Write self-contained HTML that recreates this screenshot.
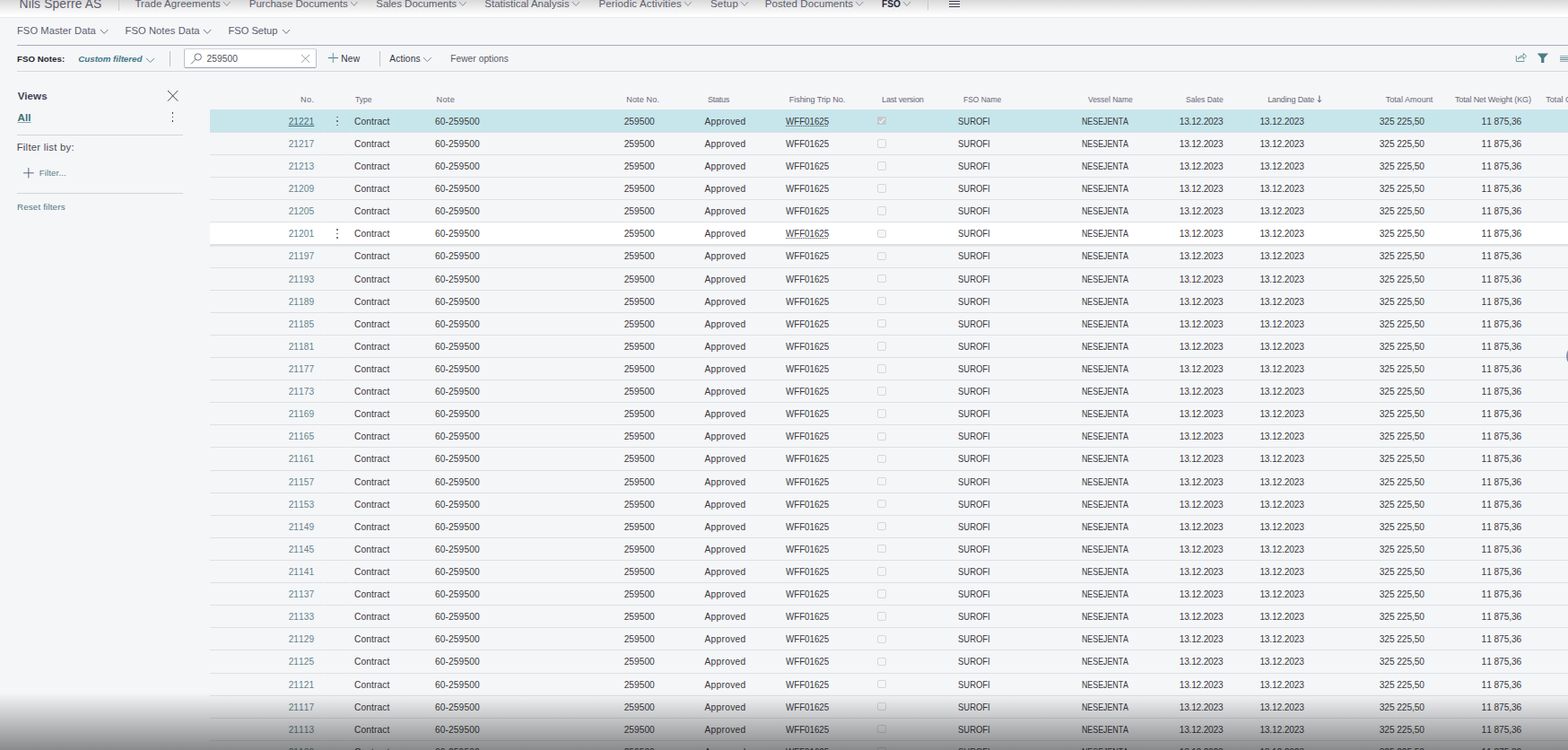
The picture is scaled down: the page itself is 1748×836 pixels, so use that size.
<!DOCTYPE html>
<html lang="en"><head><meta charset="utf-8"><title>FSO Notes</title><style>
html,body{margin:0;padding:0}
body{width:1748px;height:836px;overflow:hidden;position:relative;background:#f5f6f8;font-family:"Liberation Sans", sans-serif}
nav,header,aside,main,.r{display:block;margin:0;padding:0}
.a{position:absolute;display:block}
.t{position:absolute;white-space:nowrap;line-height:14px;display:block}
.d{font-size:10.2px;font-kerning:none}
#nav1{position:absolute;left:0;top:0;width:1748px;height:19px;background:linear-gradient(to bottom,#d9d9d9 0,#e7e7e7 6px,#f5f5f5 12px,#ffffff 18px);border-bottom:1px solid #e9eaec}
#search{background:#fff;border:1px solid #bdbfc8;border-top-color:#d3d5da;border-bottom-color:#9c9eae;border-radius:2px;box-sizing:border-box}
.ln{position:absolute;left:234px;width:1520px;height:1px;background:linear-gradient(to right,#dee0e4 0,#dee0e4 127px,#eceef1 127px,#eceef1 128px,#dee0e4 128px,#dee0e4 156px,#eceef1 156px,#eceef1 157px,#dee0e4 157px)}
.cb{position:absolute;left:978.2px;width:9.8px;height:9.4px;box-sizing:border-box;border:1px solid #d5d7da;border-radius:2px;background:#f5f6f7}
</style></head>
<body>
<nav>
<div id="nav1"></div>
<span id="co" class="t" style="left:21.57px;top:-2.00px;font-size:13.8px;letter-spacing:0.151px;color:#5c5c6e">Nils Sperre AS</span>
<span id="n1_0" class="t" style="left:150.41px;top:-3.00px;font-size:11.5px;letter-spacing:0.073px;color:#5c5c6e">Trade Agreements</span>
<span id="n1_1" class="t" style="left:277.81px;top:-3.00px;font-size:11.5px;letter-spacing:-0.004px;color:#5c5c6e">Purchase Documents</span>
<span id="n1_2" class="t" style="left:419.31px;top:-3.00px;font-size:11.5px;letter-spacing:-0.025px;color:#5c5c6e">Sales Documents</span>
<span id="n1_3" class="t" style="left:540.31px;top:-3.00px;font-size:11.5px;letter-spacing:-0.012px;color:#5c5c6e">Statistical Analysis</span>
<span id="n1_4" class="t" style="left:667.51px;top:-3.00px;font-size:11.5px;letter-spacing:0.150px;color:#5c5c6e">Periodic Activities</span>
<span id="n1_5" class="t" style="left:792.01px;top:-3.00px;font-size:11.5px;letter-spacing:0.204px;color:#5c5c6e">Setup</span>
<span id="n1_6" class="t" style="left:852.71px;top:-3.00px;font-size:11.5px;letter-spacing:0.081px;color:#5c5c6e">Posted Documents</span>
<span id="n1_fso" class="t" style="left:983.11px;top:-3.00px;font-size:11.5px;transform:scaleX(0.8790);transform-origin:0 0;color:#26263a;font-weight:bold">FSO</span>
<span id="n2_0" class="t" style="left:18.97px;top:27.00px;font-size:11.2px;letter-spacing:0.058px;color:#5c5c6e">FSO Master Data</span>
<span id="n2_1" class="t" style="left:139.47px;top:27.00px;font-size:11.2px;letter-spacing:0.078px;color:#5c5c6e">FSO Notes Data</span>
<span id="n2_2" class="t" style="left:254.47px;top:27.00px;font-size:11.2px;letter-spacing:-0.035px;color:#5c5c6e">FSO Setup</span>
<svg class="a" style="left:248.00px;top:1.40px" width="9.50" height="6.40" viewBox="-1 -1 9.50 6.40"><path d="M0 0 L3.75 4.40 L7.50 0" fill="none" stroke="#8d8d9c" stroke-width="1.0"/></svg>
<svg class="a" style="left:389.50px;top:1.40px" width="9.50" height="6.40" viewBox="-1 -1 9.50 6.40"><path d="M0 0 L3.75 4.40 L7.50 0" fill="none" stroke="#8d8d9c" stroke-width="1.0"/></svg>
<svg class="a" style="left:510.80px;top:1.40px" width="9.80" height="6.40" viewBox="-1 -1 9.80 6.40"><path d="M0 0 L3.90 4.40 L7.80 0" fill="none" stroke="#8d8d9c" stroke-width="1.0"/></svg>
<svg class="a" style="left:636.60px;top:1.40px" width="10.10" height="6.40" viewBox="-1 -1 10.10 6.40"><path d="M0 0 L4.05 4.40 L8.10 0" fill="none" stroke="#8d8d9c" stroke-width="1.0"/></svg>
<svg class="a" style="left:761.50px;top:1.40px" width="9.80" height="6.40" viewBox="-1 -1 9.80 6.40"><path d="M0 0 L3.90 4.40 L7.80 0" fill="none" stroke="#8d8d9c" stroke-width="1.0"/></svg>
<svg class="a" style="left:824.60px;top:1.40px" width="10.10" height="6.40" viewBox="-1 -1 10.10 6.40"><path d="M0 0 L4.05 4.40 L8.10 0" fill="none" stroke="#8d8d9c" stroke-width="1.0"/></svg>
<svg class="a" style="left:952.50px;top:1.40px" width="10.30" height="6.40" viewBox="-1 -1 10.30 6.40"><path d="M0 0 L4.15 4.40 L8.30 0" fill="none" stroke="#8d8d9c" stroke-width="1.0"/></svg>
<svg class="a" style="left:1005.90px;top:1.40px" width="10.00" height="6.40" viewBox="-1 -1 10.00 6.40"><path d="M0 0 L4.00 4.40 L8.00 0" fill="none" stroke="#8d8d9c" stroke-width="1.0"/></svg>
<div class="a" style="left:132px;top:0;width:1px;height:11.6px;background:#c9c9cf"></div>
<div class="a" style="left:1033.5px;top:0;width:1px;height:11.4px;background:#c9c9cf"></div>
<div class="a" style="left:1058px;top:0.7px;width:12px;height:1px;background:#3c3c55"></div>
<div class="a" style="left:1058px;top:4.0px;width:12px;height:1px;background:#3c3c55"></div>
<div class="a" style="left:1058px;top:7.4px;width:12px;height:1px;background:#3c3c55"></div>
<svg class="a" style="left:111.40px;top:31.80px" width="10.40" height="6.40" viewBox="-1 -1 10.40 6.40"><path d="M0 0 L4.20 4.40 L8.40 0" fill="none" stroke="#6e6e80" stroke-width="1.0"/></svg>
<svg class="a" style="left:226.30px;top:31.80px" width="10.30" height="6.40" viewBox="-1 -1 10.30 6.40"><path d="M0 0 L4.15 4.40 L8.30 0" fill="none" stroke="#6e6e80" stroke-width="1.0"/></svg>
<svg class="a" style="left:313.50px;top:31.80px" width="10.10" height="6.40" viewBox="-1 -1 10.10 6.40"><path d="M0 0 L4.05 4.40 L8.10 0" fill="none" stroke="#6e6e80" stroke-width="1.0"/></svg>
</nav>
<header>
<div class="a" id="search" style="left:205.2px;top:54px;width:147.5px;height:21.8px"></div>
<span id="tb_title" class="t" style="left:19.05px;top:59.00px;font-size:9.7px;letter-spacing:0.041px;color:#24242e;font-weight:bold">FSO Notes:</span>
<span id="tb_cf" class="t" style="left:87.29px;top:59.00px;font-size:9.8px;letter-spacing:-0.054px;color:#437888;font-style:italic;font-weight:bold">Custom filtered</span>
<span id="tb_search" class="t" style="left:230.39px;top:59.00px;font-size:10.2px;letter-spacing:0.112px;color:#50505c">259500</span>
<span id="tb_new" class="t" style="left:380.19px;top:59.00px;font-size:10.2px;letter-spacing:0.317px;color:#34343e">New</span>
<span id="tb_act" class="t" style="left:434.33px;top:59.00px;font-size:10.2px;letter-spacing:0.140px;color:#34343e">Actions</span>
<span id="tb_fewer" class="t" style="left:502.21px;top:59.00px;font-size:10.2px;letter-spacing:0.054px;color:#5a5a66">Fewer options</span>
<div class="a" style="left:19.3px;top:50px;width:1730px;height:1px;background:#a7aabb"></div>
<div class="a" style="left:19.3px;top:79px;width:1730px;height:1.4px;background:#d5d7dc"></div>
<svg class="a" style="left:161.90px;top:63.60px" width="11.10" height="6.40" viewBox="-1 -1 11.10 6.40"><path d="M0 0 L4.55 4.40 L9.10 0" fill="none" stroke="#6a939c" stroke-width="1.0"/></svg>
<div class="a" style="left:189px;top:57px;width:1px;height:16.7px;background:#bdbdc4"></div>
<svg class="a" style="left:212.4px;top:59px" width="15" height="14" viewBox="0 0 15 14"><circle cx="8.7" cy="4.5" r="3.7" fill="none" stroke="#616d76" stroke-width="0.95"/><path d="M6.0 7.3 L1.0 12.4" stroke="#616d76" stroke-width="0.95" fill="none"/></svg>
<svg class="a" style="left:334.8px;top:60.1px" width="12" height="12" viewBox="0 0 12 12"><path d="M1.1 0.9 L10.1 9.7 M10.1 0.9 L1.1 9.7" stroke="#858a94" stroke-width="0.85" fill="none"/></svg>
<svg class="a" style="left:364.7px;top:58px" width="13" height="13" viewBox="0 0 13 13"><path d="M0.8 6.5 H12" stroke="#4a7f8b" stroke-width="1.1" fill="none"/><path d="M6.35 1 V11.9" stroke="#7fa6ae" stroke-width="1.2" fill="none"/></svg>
<div class="a" style="left:423.3px;top:57px;width:1px;height:16.5px;background:#c4c4cb"></div>
<svg class="a" style="left:471.20px;top:63.00px" width="10.80" height="6.70" viewBox="-1 -1 10.80 6.70"><path d="M0 0 L4.40 4.70 L8.80 0" fill="none" stroke="#8c8c98" stroke-width="1.0"/></svg>
<svg class="a" style="left:1689px;top:58px" width="14" height="12" viewBox="0 0 14 12"><path d="M1.4 4.1 V10.5 H9.9 V9.2" fill="none" stroke="#4a7c86" stroke-width="0.8"/><path d="M3.3 8 C3.9 5.2 6.2 3.9 9.4 3.9 V1.5 L12.8 4.7 L9.4 7.9 V5.6 C6.9 5.6 4.9 6.2 3.3 8 Z" fill="none" stroke="#4a7c86" stroke-width="0.75" stroke-linejoin="round"/></svg>
<svg class="a" style="left:1713px;top:59px" width="14" height="12" viewBox="0 0 14 12"><path d="M0.8 0.5 H13.1 L8.35 5.8 V10.9 H5.15 V5.8 Z" fill="#4a7c86"/></svg>
<div class="a" style="left:1738.8px;top:62.0px;width:1px;height:0.8px;background:#8fb0b7"></div>
<div class="a" style="left:1740.4px;top:62.0px;width:8px;height:0.8px;background:#8fb0b7"></div>
<div class="a" style="left:1738.8px;top:64.19999999999999px;width:1px;height:0.8px;background:#5b8791"></div>
<div class="a" style="left:1740.4px;top:64.19999999999999px;width:8px;height:0.8px;background:#5b8791"></div>
<div class="a" style="left:1738.8px;top:66.1px;width:1px;height:0.8px;background:#5b8791"></div>
<div class="a" style="left:1740.4px;top:66.1px;width:8px;height:0.8px;background:#5b8791"></div>
<div class="a" style="left:1738.8px;top:68.1px;width:1px;height:0.8px;background:#8fb0b7"></div>
<div class="a" style="left:1740.4px;top:68.1px;width:8px;height:0.8px;background:#8fb0b7"></div>
</header>
<aside>
<span id="lp_views" class="t" style="left:19.68px;top:100.00px;font-size:11.6px;letter-spacing:0.086px;color:#424254;font-weight:bold">Views</span>
<span id="lp_all" class="t" style="left:19.50px;top:124.00px;font-size:11.6px;letter-spacing:0.082px;color:#3b6f7a;font-weight:bold;text-decoration:underline;text-underline-offset:1px;text-decoration-thickness:1px;text-decoration-color:#7fa9b1">All</span>
<span id="lp_flb" class="t" style="left:18.68px;top:157.00px;font-size:11.3px;letter-spacing:0.267px;color:#4a4a55">Filter list by:</span>
<span id="lp_filter" class="t" style="left:43.73px;top:186.00px;font-size:9.6px;letter-spacing:0.149px;color:#5d7d88">Filter...</span>
<span id="lp_reset" class="t" style="left:19.00px;top:224.00px;font-size:9.8px;letter-spacing:0.151px;color:#4f7782">Reset filters</span>
<svg class="a" style="left:185.8px;top:100px" width="14" height="14" viewBox="0 0 14 14"><path d="M1 1 L12.3 12.7 M12.3 1 L1 12.7" stroke="#3e3e4e" stroke-width="1" fill="none"/></svg>
<div class="a" style="left:191.6px;top:125.25px;width:1.4px;height:1.7px;background:#3c3c52"></div>
<div class="a" style="left:191.6px;top:129.90px;width:1.4px;height:1.4px;background:#3c3c52"></div>
<div class="a" style="left:191.6px;top:134.05px;width:1.4px;height:1.7px;background:#3c3c52"></div>
<div class="a" style="left:19.3px;top:149.8px;width:184.6px;height:1px;background:#d3d5d9"></div>
<div class="a" style="left:19.3px;top:214.8px;width:184.6px;height:1px;background:#d3d5d9"></div>
<svg class="a" style="left:25.2px;top:186px" width="14" height="14" viewBox="0 0 14 14"><path d="M1 6.8 H12.7 M6.85 1 V12.5" stroke="#5a6a78" stroke-width="1" fill="none"/></svg>
</aside>
<main>
<span id="h_0" class="t" style="left:334.97px;top:104.00px;font-size:9.1px;letter-spacing:0.429px;color:#686873">No.</span>
<span id="h_1" class="t" style="left:396.36px;top:104.00px;font-size:9.1px;transform:scaleX(0.9346);transform-origin:0 0;color:#686873">Type</span>
<span id="h_2" class="t" style="left:486.55px;top:104.00px;font-size:9.1px;letter-spacing:0.334px;color:#686873">Note</span>
<span id="h_3" class="t" style="left:698.24px;top:104.00px;font-size:9.1px;letter-spacing:0.121px;color:#686873">Note No.</span>
<span id="h_4" class="t" style="left:789.06px;top:104.00px;font-size:9.1px;letter-spacing:-0.298px;color:#686873">Status</span>
<span id="h_5" class="t" style="left:879.78px;top:104.00px;font-size:9.1px;letter-spacing:-0.083px;color:#686873">Fishing Trip No.</span>
<span id="h_6" class="t" style="left:983.06px;top:104.00px;font-size:9.1px;letter-spacing:-0.203px;color:#686873">Last version</span>
<span id="h_7" class="t" style="left:1074.34px;top:104.00px;font-size:9.1px;transform:scaleX(0.9307);transform-origin:0 0;color:#686873">FSO Name</span>
<span id="h_8" class="t" style="left:1213.44px;top:104.00px;font-size:9.1px;transform:scaleX(0.9292);transform-origin:0 0;color:#686873">Vessel Name</span>
<span id="h_9" class="t" style="left:1322.42px;top:104.00px;font-size:9.1px;transform:scaleX(0.9372);transform-origin:0 0;color:#686873">Sales Date</span>
<span id="h_10" class="t" style="left:1413.15px;top:104.00px;font-size:9.1px;letter-spacing:-0.165px;color:#686873">Landing Date</span>
<span id="h_11" class="t" style="left:1544.72px;top:104.00px;font-size:9.1px;color:#686873">Total Amount</span>
<span id="h_12" class="t" style="left:1621.92px;top:104.00px;font-size:9.1px;letter-spacing:-0.158px;color:#686873">Total Net Weight (KG)</span>
<span id="h_last" class="t" style="left:1723.25px;top:104.00px;font-size:9.1px;color:#686873">Total Gross Weight (KG)</span>
<svg class="a" style="left:1467.6px;top:105.6px" width="6" height="9" viewBox="0 0 6 9"><path d="M2.9 0.5 V7.6 M0.8 5.5 L2.9 7.9 L5 5.5" stroke="#5a5a64" stroke-width="1" fill="none"/></svg>
<div class="a" style="left:234px;top:122.1px;width:1520px;height:25.1px;background:#c7e6eb"></div>
<div class="a" style="left:234px;top:248.25px;width:1520px;height:23.81px;background:#ffffff"></div>
<div class="a" style="left:234px;top:272.06px;width:1520px;height:2.2px;background:#dddfe3;box-shadow:0 1px 1.5px rgba(0,0,0,0.06)"></div>
<div class="r">
<div class="ln" style="top:146.91px"></div>
<span class="t d" style="left:321.64px;top:129.00px;letter-spacing:0.081px;color:#64848e;color:#3f6b77;text-decoration:underline;text-underline-offset:1px;">21221</span>
<span class="t d" style="left:394.98px;top:129.00px;letter-spacing:0.126px;color:#38383e;">Contract</span>
<span class="t d" style="left:485.10px;top:129.00px;letter-spacing:0.094px;color:#38383e;">60-259500</span>
<span class="t d" style="left:695.67px;top:129.00px;letter-spacing:0.015px;color:#38383e;">259500</span>
<span class="t d" style="left:785.50px;top:129.00px;letter-spacing:0.289px;color:#38383e;">Approved</span>
<span class="t d" style="left:875.83px;top:129.00px;transform:scaleX(0.9552);transform-origin:0 0;color:#38383e;text-decoration:underline dotted;text-underline-offset:0.5px;text-decoration-thickness:1px;">WFF01625</span>
<span class="t d" style="left:1067.85px;top:129.00px;transform:scaleX(0.9282);transform-origin:0 0;color:#38383e;">SUROFI</span>
<span class="t d" style="left:1206.48px;top:129.00px;transform:scaleX(0.8660);transform-origin:0 0;color:#38383e;">NESEJENTA</span>
<span class="t d" style="left:1314.69px;top:129.00px;letter-spacing:-0.223px;color:#38383e;">13.12.2023</span>
<span class="t d" style="left:1404.38px;top:129.00px;letter-spacing:-0.166px;color:#38383e;">13.12.2023</span>
<span class="t d" style="left:1537.75px;top:129.00px;letter-spacing:-0.087px;color:#38383e;">325 225,50</span>
<span class="t d" style="left:1651.57px;top:129.00px;letter-spacing:-0.083px;color:#38383e;">11 875,36</span>
<svg class="a" style="left:978.2px;top:130.00px" width="9.8" height="9.4" viewBox="0 0 9.8 9.4"><rect x="0" y="0" width="9.7" height="9.2" rx="1.6" fill="#c3c9cc"/><path d="M2.1 4.9 L4.0 7.0 L8.0 1.9" stroke="#f4f8f9" stroke-width="1.3" fill="none"/></svg>
<div class="a" style="left:374.95px;top:129.90px;width:2px;height:1.3px;border-radius:0.5px;background:#6c6c7a"></div>
<div class="a" style="left:374.95px;top:134.10px;width:2px;height:1.7px;border-radius:0.5px;background:#6c6c7a"></div>
<div class="a" style="left:374.95px;top:138.75px;width:2px;height:1.3px;border-radius:0.5px;background:#6c6c7a"></div>
</div>
<div class="r">
<div class="ln" style="top:172.02px"></div>
<span id="c_no" class="t d" style="left:321.64px;top:154.00px;letter-spacing:0.081px;color:#64848e;">21217</span>
<span id="c_type" class="t d" style="left:394.98px;top:154.00px;letter-spacing:0.126px;color:#38383e;">Contract</span>
<span id="c_note" class="t d" style="left:485.10px;top:154.00px;letter-spacing:0.094px;color:#38383e;">60-259500</span>
<span id="c_nn" class="t d" style="left:695.67px;top:154.00px;letter-spacing:0.015px;color:#38383e;">259500</span>
<span id="c_st" class="t d" style="left:785.50px;top:154.00px;letter-spacing:0.289px;color:#38383e;">Approved</span>
<span id="c_ft" class="t d" style="left:875.83px;top:154.00px;transform:scaleX(0.9552);transform-origin:0 0;color:#38383e;">WFF01625</span>
<span id="c_fso" class="t d" style="left:1067.85px;top:154.00px;transform:scaleX(0.9282);transform-origin:0 0;color:#38383e;">SUROFI</span>
<span id="c_ves" class="t d" style="left:1206.48px;top:154.00px;transform:scaleX(0.8660);transform-origin:0 0;color:#38383e;">NESEJENTA</span>
<span id="c_sd" class="t d" style="left:1314.69px;top:154.00px;letter-spacing:-0.223px;color:#38383e;">13.12.2023</span>
<span id="c_ld" class="t d" style="left:1404.38px;top:154.00px;letter-spacing:-0.166px;color:#38383e;">13.12.2023</span>
<span id="c_ta" class="t d" style="left:1537.75px;top:154.00px;letter-spacing:-0.087px;color:#38383e;">325 225,50</span>
<span id="c_nw" class="t d" style="left:1651.57px;top:154.00px;letter-spacing:-0.083px;color:#38383e;">11 875,36</span>
<div class="cb" style="top:155.12px"></div>
</div>
<div class="r">
<div class="ln" style="top:197.13px"></div>
<span class="t d" style="left:321.64px;top:179.00px;letter-spacing:0.081px;color:#64848e;">21213</span>
<span class="t d" style="left:394.98px;top:179.00px;letter-spacing:0.126px;color:#38383e;">Contract</span>
<span class="t d" style="left:485.10px;top:179.00px;letter-spacing:0.094px;color:#38383e;">60-259500</span>
<span class="t d" style="left:695.67px;top:179.00px;letter-spacing:0.015px;color:#38383e;">259500</span>
<span class="t d" style="left:785.50px;top:179.00px;letter-spacing:0.289px;color:#38383e;">Approved</span>
<span class="t d" style="left:875.83px;top:179.00px;transform:scaleX(0.9552);transform-origin:0 0;color:#38383e;">WFF01625</span>
<span class="t d" style="left:1067.85px;top:179.00px;transform:scaleX(0.9282);transform-origin:0 0;color:#38383e;">SUROFI</span>
<span class="t d" style="left:1206.48px;top:179.00px;transform:scaleX(0.8660);transform-origin:0 0;color:#38383e;">NESEJENTA</span>
<span class="t d" style="left:1314.69px;top:179.00px;letter-spacing:-0.223px;color:#38383e;">13.12.2023</span>
<span class="t d" style="left:1404.38px;top:179.00px;letter-spacing:-0.166px;color:#38383e;">13.12.2023</span>
<span class="t d" style="left:1537.75px;top:179.00px;letter-spacing:-0.087px;color:#38383e;">325 225,50</span>
<span class="t d" style="left:1651.57px;top:179.00px;letter-spacing:-0.083px;color:#38383e;">11 875,36</span>
<div class="cb" style="top:180.22px"></div>
</div>
<div class="r">
<div class="ln" style="top:222.24px"></div>
<span class="t d" style="left:321.64px;top:204.00px;letter-spacing:0.081px;color:#64848e;">21209</span>
<span class="t d" style="left:394.98px;top:204.00px;letter-spacing:0.126px;color:#38383e;">Contract</span>
<span class="t d" style="left:485.10px;top:204.00px;letter-spacing:0.094px;color:#38383e;">60-259500</span>
<span class="t d" style="left:695.67px;top:204.00px;letter-spacing:0.015px;color:#38383e;">259500</span>
<span class="t d" style="left:785.50px;top:204.00px;letter-spacing:0.289px;color:#38383e;">Approved</span>
<span class="t d" style="left:875.83px;top:204.00px;transform:scaleX(0.9552);transform-origin:0 0;color:#38383e;">WFF01625</span>
<span class="t d" style="left:1067.85px;top:204.00px;transform:scaleX(0.9282);transform-origin:0 0;color:#38383e;">SUROFI</span>
<span class="t d" style="left:1206.48px;top:204.00px;transform:scaleX(0.8660);transform-origin:0 0;color:#38383e;">NESEJENTA</span>
<span class="t d" style="left:1314.69px;top:204.00px;letter-spacing:-0.223px;color:#38383e;">13.12.2023</span>
<span class="t d" style="left:1404.38px;top:204.00px;letter-spacing:-0.166px;color:#38383e;">13.12.2023</span>
<span class="t d" style="left:1537.75px;top:204.00px;letter-spacing:-0.087px;color:#38383e;">325 225,50</span>
<span class="t d" style="left:1651.57px;top:204.00px;letter-spacing:-0.083px;color:#38383e;">11 875,36</span>
<div class="cb" style="top:205.34px"></div>
</div>
<div class="r">
<div class="ln" style="top:247.35px"></div>
<span class="t d" style="left:321.64px;top:229.00px;letter-spacing:0.081px;color:#64848e;">21205</span>
<span class="t d" style="left:394.98px;top:229.00px;letter-spacing:0.126px;color:#38383e;">Contract</span>
<span class="t d" style="left:485.10px;top:229.00px;letter-spacing:0.094px;color:#38383e;">60-259500</span>
<span class="t d" style="left:695.67px;top:229.00px;letter-spacing:0.015px;color:#38383e;">259500</span>
<span class="t d" style="left:785.50px;top:229.00px;letter-spacing:0.289px;color:#38383e;">Approved</span>
<span class="t d" style="left:875.83px;top:229.00px;transform:scaleX(0.9552);transform-origin:0 0;color:#38383e;">WFF01625</span>
<span class="t d" style="left:1067.85px;top:229.00px;transform:scaleX(0.9282);transform-origin:0 0;color:#38383e;">SUROFI</span>
<span class="t d" style="left:1206.48px;top:229.00px;transform:scaleX(0.8660);transform-origin:0 0;color:#38383e;">NESEJENTA</span>
<span class="t d" style="left:1314.69px;top:229.00px;letter-spacing:-0.223px;color:#38383e;">13.12.2023</span>
<span class="t d" style="left:1404.38px;top:229.00px;letter-spacing:-0.166px;color:#38383e;">13.12.2023</span>
<span class="t d" style="left:1537.75px;top:229.00px;letter-spacing:-0.087px;color:#38383e;">325 225,50</span>
<span class="t d" style="left:1651.57px;top:229.00px;letter-spacing:-0.083px;color:#38383e;">11 875,36</span>
<div class="cb" style="top:230.45px"></div>
</div>
<div class="r">
<div class="ln" style="top:272.46px"></div>
<span class="t d" style="left:321.64px;top:254.00px;letter-spacing:0.081px;color:#64848e;">21201</span>
<span class="t d" style="left:394.98px;top:254.00px;letter-spacing:0.126px;color:#38383e;">Contract</span>
<span class="t d" style="left:485.10px;top:254.00px;letter-spacing:0.094px;color:#38383e;">60-259500</span>
<span class="t d" style="left:695.67px;top:254.00px;letter-spacing:0.015px;color:#38383e;">259500</span>
<span class="t d" style="left:785.50px;top:254.00px;letter-spacing:0.289px;color:#38383e;">Approved</span>
<span class="t d" style="left:875.83px;top:254.00px;transform:scaleX(0.9552);transform-origin:0 0;color:#38383e;text-decoration:underline dotted;text-underline-offset:0.5px;text-decoration-thickness:1px;">WFF01625</span>
<span class="t d" style="left:1067.85px;top:254.00px;transform:scaleX(0.9282);transform-origin:0 0;color:#38383e;">SUROFI</span>
<span class="t d" style="left:1206.48px;top:254.00px;transform:scaleX(0.8660);transform-origin:0 0;color:#38383e;">NESEJENTA</span>
<span class="t d" style="left:1314.69px;top:254.00px;letter-spacing:-0.223px;color:#38383e;">13.12.2023</span>
<span class="t d" style="left:1404.38px;top:254.00px;letter-spacing:-0.166px;color:#38383e;">13.12.2023</span>
<span class="t d" style="left:1537.75px;top:254.00px;letter-spacing:-0.087px;color:#38383e;">325 225,50</span>
<span class="t d" style="left:1651.57px;top:254.00px;letter-spacing:-0.083px;color:#38383e;">11 875,36</span>
<div class="cb" style="top:255.56px"></div>
<div class="a" style="left:374.95px;top:255.46px;width:2px;height:1.3px;border-radius:0.5px;background:#6c6c7a"></div>
<div class="a" style="left:374.95px;top:259.65px;width:2px;height:1.7px;border-radius:0.5px;background:#6c6c7a"></div>
<div class="a" style="left:374.95px;top:264.31px;width:2px;height:1.3px;border-radius:0.5px;background:#6c6c7a"></div>
</div>
<div class="r">
<div class="ln" style="top:297.57px"></div>
<span class="t d" style="left:321.64px;top:279.00px;letter-spacing:0.081px;color:#64848e;">21197</span>
<span class="t d" style="left:394.98px;top:279.00px;letter-spacing:0.126px;color:#38383e;">Contract</span>
<span class="t d" style="left:485.10px;top:279.00px;letter-spacing:0.094px;color:#38383e;">60-259500</span>
<span class="t d" style="left:695.67px;top:279.00px;letter-spacing:0.015px;color:#38383e;">259500</span>
<span class="t d" style="left:785.50px;top:279.00px;letter-spacing:0.289px;color:#38383e;">Approved</span>
<span class="t d" style="left:875.83px;top:279.00px;transform:scaleX(0.9552);transform-origin:0 0;color:#38383e;">WFF01625</span>
<span class="t d" style="left:1067.85px;top:279.00px;transform:scaleX(0.9282);transform-origin:0 0;color:#38383e;">SUROFI</span>
<span class="t d" style="left:1206.48px;top:279.00px;transform:scaleX(0.8660);transform-origin:0 0;color:#38383e;">NESEJENTA</span>
<span class="t d" style="left:1314.69px;top:279.00px;letter-spacing:-0.223px;color:#38383e;">13.12.2023</span>
<span class="t d" style="left:1404.38px;top:279.00px;letter-spacing:-0.166px;color:#38383e;">13.12.2023</span>
<span class="t d" style="left:1537.75px;top:279.00px;letter-spacing:-0.087px;color:#38383e;">325 225,50</span>
<span class="t d" style="left:1651.57px;top:279.00px;letter-spacing:-0.083px;color:#38383e;">11 875,36</span>
<div class="cb" style="top:280.67px"></div>
</div>
<div class="r">
<div class="ln" style="top:322.68px"></div>
<span class="t d" style="left:321.64px;top:305.00px;letter-spacing:0.081px;color:#64848e;">21193</span>
<span class="t d" style="left:394.98px;top:305.00px;letter-spacing:0.126px;color:#38383e;">Contract</span>
<span class="t d" style="left:485.10px;top:305.00px;letter-spacing:0.094px;color:#38383e;">60-259500</span>
<span class="t d" style="left:695.67px;top:305.00px;letter-spacing:0.015px;color:#38383e;">259500</span>
<span class="t d" style="left:785.50px;top:305.00px;letter-spacing:0.289px;color:#38383e;">Approved</span>
<span class="t d" style="left:875.83px;top:305.00px;transform:scaleX(0.9552);transform-origin:0 0;color:#38383e;">WFF01625</span>
<span class="t d" style="left:1067.85px;top:305.00px;transform:scaleX(0.9282);transform-origin:0 0;color:#38383e;">SUROFI</span>
<span class="t d" style="left:1206.48px;top:305.00px;transform:scaleX(0.8660);transform-origin:0 0;color:#38383e;">NESEJENTA</span>
<span class="t d" style="left:1314.69px;top:305.00px;letter-spacing:-0.223px;color:#38383e;">13.12.2023</span>
<span class="t d" style="left:1404.38px;top:305.00px;letter-spacing:-0.166px;color:#38383e;">13.12.2023</span>
<span class="t d" style="left:1537.75px;top:305.00px;letter-spacing:-0.087px;color:#38383e;">325 225,50</span>
<span class="t d" style="left:1651.57px;top:305.00px;letter-spacing:-0.083px;color:#38383e;">11 875,36</span>
<div class="cb" style="top:305.78px"></div>
</div>
<div class="r">
<div class="ln" style="top:347.79px"></div>
<span class="t d" style="left:321.64px;top:330.00px;letter-spacing:0.081px;color:#64848e;">21189</span>
<span class="t d" style="left:394.98px;top:330.00px;letter-spacing:0.126px;color:#38383e;">Contract</span>
<span class="t d" style="left:485.10px;top:330.00px;letter-spacing:0.094px;color:#38383e;">60-259500</span>
<span class="t d" style="left:695.67px;top:330.00px;letter-spacing:0.015px;color:#38383e;">259500</span>
<span class="t d" style="left:785.50px;top:330.00px;letter-spacing:0.289px;color:#38383e;">Approved</span>
<span class="t d" style="left:875.83px;top:330.00px;transform:scaleX(0.9552);transform-origin:0 0;color:#38383e;">WFF01625</span>
<span class="t d" style="left:1067.85px;top:330.00px;transform:scaleX(0.9282);transform-origin:0 0;color:#38383e;">SUROFI</span>
<span class="t d" style="left:1206.48px;top:330.00px;transform:scaleX(0.8660);transform-origin:0 0;color:#38383e;">NESEJENTA</span>
<span class="t d" style="left:1314.69px;top:330.00px;letter-spacing:-0.223px;color:#38383e;">13.12.2023</span>
<span class="t d" style="left:1404.38px;top:330.00px;letter-spacing:-0.166px;color:#38383e;">13.12.2023</span>
<span class="t d" style="left:1537.75px;top:330.00px;letter-spacing:-0.087px;color:#38383e;">325 225,50</span>
<span class="t d" style="left:1651.57px;top:330.00px;letter-spacing:-0.083px;color:#38383e;">11 875,36</span>
<div class="cb" style="top:330.89px"></div>
</div>
<div class="r">
<div class="ln" style="top:372.90px"></div>
<span class="t d" style="left:321.64px;top:355.00px;letter-spacing:0.081px;color:#64848e;">21185</span>
<span class="t d" style="left:394.98px;top:355.00px;letter-spacing:0.126px;color:#38383e;">Contract</span>
<span class="t d" style="left:485.10px;top:355.00px;letter-spacing:0.094px;color:#38383e;">60-259500</span>
<span class="t d" style="left:695.67px;top:355.00px;letter-spacing:0.015px;color:#38383e;">259500</span>
<span class="t d" style="left:785.50px;top:355.00px;letter-spacing:0.289px;color:#38383e;">Approved</span>
<span class="t d" style="left:875.83px;top:355.00px;transform:scaleX(0.9552);transform-origin:0 0;color:#38383e;">WFF01625</span>
<span class="t d" style="left:1067.85px;top:355.00px;transform:scaleX(0.9282);transform-origin:0 0;color:#38383e;">SUROFI</span>
<span class="t d" style="left:1206.48px;top:355.00px;transform:scaleX(0.8660);transform-origin:0 0;color:#38383e;">NESEJENTA</span>
<span class="t d" style="left:1314.69px;top:355.00px;letter-spacing:-0.223px;color:#38383e;">13.12.2023</span>
<span class="t d" style="left:1404.38px;top:355.00px;letter-spacing:-0.166px;color:#38383e;">13.12.2023</span>
<span class="t d" style="left:1537.75px;top:355.00px;letter-spacing:-0.087px;color:#38383e;">325 225,50</span>
<span class="t d" style="left:1651.57px;top:355.00px;letter-spacing:-0.083px;color:#38383e;">11 875,36</span>
<div class="cb" style="top:356.00px"></div>
</div>
<div class="r">
<div class="ln" style="top:398.01px"></div>
<span class="t d" style="left:321.64px;top:380.00px;letter-spacing:0.081px;color:#64848e;">21181</span>
<span class="t d" style="left:394.98px;top:380.00px;letter-spacing:0.126px;color:#38383e;">Contract</span>
<span class="t d" style="left:485.10px;top:380.00px;letter-spacing:0.094px;color:#38383e;">60-259500</span>
<span class="t d" style="left:695.67px;top:380.00px;letter-spacing:0.015px;color:#38383e;">259500</span>
<span class="t d" style="left:785.50px;top:380.00px;letter-spacing:0.289px;color:#38383e;">Approved</span>
<span class="t d" style="left:875.83px;top:380.00px;transform:scaleX(0.9552);transform-origin:0 0;color:#38383e;">WFF01625</span>
<span class="t d" style="left:1067.85px;top:380.00px;transform:scaleX(0.9282);transform-origin:0 0;color:#38383e;">SUROFI</span>
<span class="t d" style="left:1206.48px;top:380.00px;transform:scaleX(0.8660);transform-origin:0 0;color:#38383e;">NESEJENTA</span>
<span class="t d" style="left:1314.69px;top:380.00px;letter-spacing:-0.223px;color:#38383e;">13.12.2023</span>
<span class="t d" style="left:1404.38px;top:380.00px;letter-spacing:-0.166px;color:#38383e;">13.12.2023</span>
<span class="t d" style="left:1537.75px;top:380.00px;letter-spacing:-0.087px;color:#38383e;">325 225,50</span>
<span class="t d" style="left:1651.57px;top:380.00px;letter-spacing:-0.083px;color:#38383e;">11 875,36</span>
<div class="cb" style="top:381.11px"></div>
</div>
<div class="r">
<div class="ln" style="top:423.12px"></div>
<span class="t d" style="left:321.64px;top:405.00px;letter-spacing:0.081px;color:#64848e;">21177</span>
<span class="t d" style="left:394.98px;top:405.00px;letter-spacing:0.126px;color:#38383e;">Contract</span>
<span class="t d" style="left:485.10px;top:405.00px;letter-spacing:0.094px;color:#38383e;">60-259500</span>
<span class="t d" style="left:695.67px;top:405.00px;letter-spacing:0.015px;color:#38383e;">259500</span>
<span class="t d" style="left:785.50px;top:405.00px;letter-spacing:0.289px;color:#38383e;">Approved</span>
<span class="t d" style="left:875.83px;top:405.00px;transform:scaleX(0.9552);transform-origin:0 0;color:#38383e;">WFF01625</span>
<span class="t d" style="left:1067.85px;top:405.00px;transform:scaleX(0.9282);transform-origin:0 0;color:#38383e;">SUROFI</span>
<span class="t d" style="left:1206.48px;top:405.00px;transform:scaleX(0.8660);transform-origin:0 0;color:#38383e;">NESEJENTA</span>
<span class="t d" style="left:1314.69px;top:405.00px;letter-spacing:-0.223px;color:#38383e;">13.12.2023</span>
<span class="t d" style="left:1404.38px;top:405.00px;letter-spacing:-0.166px;color:#38383e;">13.12.2023</span>
<span class="t d" style="left:1537.75px;top:405.00px;letter-spacing:-0.087px;color:#38383e;">325 225,50</span>
<span class="t d" style="left:1651.57px;top:405.00px;letter-spacing:-0.083px;color:#38383e;">11 875,36</span>
<div class="cb" style="top:406.22px"></div>
</div>
<div class="r">
<div class="ln" style="top:448.23px"></div>
<span class="t d" style="left:321.64px;top:430.00px;letter-spacing:0.081px;color:#64848e;">21173</span>
<span class="t d" style="left:394.98px;top:430.00px;letter-spacing:0.126px;color:#38383e;">Contract</span>
<span class="t d" style="left:485.10px;top:430.00px;letter-spacing:0.094px;color:#38383e;">60-259500</span>
<span class="t d" style="left:695.67px;top:430.00px;letter-spacing:0.015px;color:#38383e;">259500</span>
<span class="t d" style="left:785.50px;top:430.00px;letter-spacing:0.289px;color:#38383e;">Approved</span>
<span class="t d" style="left:875.83px;top:430.00px;transform:scaleX(0.9552);transform-origin:0 0;color:#38383e;">WFF01625</span>
<span class="t d" style="left:1067.85px;top:430.00px;transform:scaleX(0.9282);transform-origin:0 0;color:#38383e;">SUROFI</span>
<span class="t d" style="left:1206.48px;top:430.00px;transform:scaleX(0.8660);transform-origin:0 0;color:#38383e;">NESEJENTA</span>
<span class="t d" style="left:1314.69px;top:430.00px;letter-spacing:-0.223px;color:#38383e;">13.12.2023</span>
<span class="t d" style="left:1404.38px;top:430.00px;letter-spacing:-0.166px;color:#38383e;">13.12.2023</span>
<span class="t d" style="left:1537.75px;top:430.00px;letter-spacing:-0.087px;color:#38383e;">325 225,50</span>
<span class="t d" style="left:1651.57px;top:430.00px;letter-spacing:-0.083px;color:#38383e;">11 875,36</span>
<div class="cb" style="top:431.33px"></div>
</div>
<div class="r">
<div class="ln" style="top:473.34px"></div>
<span class="t d" style="left:321.64px;top:455.00px;letter-spacing:0.081px;color:#64848e;">21169</span>
<span class="t d" style="left:394.98px;top:455.00px;letter-spacing:0.126px;color:#38383e;">Contract</span>
<span class="t d" style="left:485.10px;top:455.00px;letter-spacing:0.094px;color:#38383e;">60-259500</span>
<span class="t d" style="left:695.67px;top:455.00px;letter-spacing:0.015px;color:#38383e;">259500</span>
<span class="t d" style="left:785.50px;top:455.00px;letter-spacing:0.289px;color:#38383e;">Approved</span>
<span class="t d" style="left:875.83px;top:455.00px;transform:scaleX(0.9552);transform-origin:0 0;color:#38383e;">WFF01625</span>
<span class="t d" style="left:1067.85px;top:455.00px;transform:scaleX(0.9282);transform-origin:0 0;color:#38383e;">SUROFI</span>
<span class="t d" style="left:1206.48px;top:455.00px;transform:scaleX(0.8660);transform-origin:0 0;color:#38383e;">NESEJENTA</span>
<span class="t d" style="left:1314.69px;top:455.00px;letter-spacing:-0.223px;color:#38383e;">13.12.2023</span>
<span class="t d" style="left:1404.38px;top:455.00px;letter-spacing:-0.166px;color:#38383e;">13.12.2023</span>
<span class="t d" style="left:1537.75px;top:455.00px;letter-spacing:-0.087px;color:#38383e;">325 225,50</span>
<span class="t d" style="left:1651.57px;top:455.00px;letter-spacing:-0.083px;color:#38383e;">11 875,36</span>
<div class="cb" style="top:456.44px"></div>
</div>
<div class="r">
<div class="ln" style="top:498.45px"></div>
<span class="t d" style="left:321.64px;top:480.00px;letter-spacing:0.081px;color:#64848e;">21165</span>
<span class="t d" style="left:394.98px;top:480.00px;letter-spacing:0.126px;color:#38383e;">Contract</span>
<span class="t d" style="left:485.10px;top:480.00px;letter-spacing:0.094px;color:#38383e;">60-259500</span>
<span class="t d" style="left:695.67px;top:480.00px;letter-spacing:0.015px;color:#38383e;">259500</span>
<span class="t d" style="left:785.50px;top:480.00px;letter-spacing:0.289px;color:#38383e;">Approved</span>
<span class="t d" style="left:875.83px;top:480.00px;transform:scaleX(0.9552);transform-origin:0 0;color:#38383e;">WFF01625</span>
<span class="t d" style="left:1067.85px;top:480.00px;transform:scaleX(0.9282);transform-origin:0 0;color:#38383e;">SUROFI</span>
<span class="t d" style="left:1206.48px;top:480.00px;transform:scaleX(0.8660);transform-origin:0 0;color:#38383e;">NESEJENTA</span>
<span class="t d" style="left:1314.69px;top:480.00px;letter-spacing:-0.223px;color:#38383e;">13.12.2023</span>
<span class="t d" style="left:1404.38px;top:480.00px;letter-spacing:-0.166px;color:#38383e;">13.12.2023</span>
<span class="t d" style="left:1537.75px;top:480.00px;letter-spacing:-0.087px;color:#38383e;">325 225,50</span>
<span class="t d" style="left:1651.57px;top:480.00px;letter-spacing:-0.083px;color:#38383e;">11 875,36</span>
<div class="cb" style="top:481.55px"></div>
</div>
<div class="r">
<div class="ln" style="top:523.56px"></div>
<span class="t d" style="left:321.64px;top:505.00px;letter-spacing:0.081px;color:#64848e;">21161</span>
<span class="t d" style="left:394.98px;top:505.00px;letter-spacing:0.126px;color:#38383e;">Contract</span>
<span class="t d" style="left:485.10px;top:505.00px;letter-spacing:0.094px;color:#38383e;">60-259500</span>
<span class="t d" style="left:695.67px;top:505.00px;letter-spacing:0.015px;color:#38383e;">259500</span>
<span class="t d" style="left:785.50px;top:505.00px;letter-spacing:0.289px;color:#38383e;">Approved</span>
<span class="t d" style="left:875.83px;top:505.00px;transform:scaleX(0.9552);transform-origin:0 0;color:#38383e;">WFF01625</span>
<span class="t d" style="left:1067.85px;top:505.00px;transform:scaleX(0.9282);transform-origin:0 0;color:#38383e;">SUROFI</span>
<span class="t d" style="left:1206.48px;top:505.00px;transform:scaleX(0.8660);transform-origin:0 0;color:#38383e;">NESEJENTA</span>
<span class="t d" style="left:1314.69px;top:505.00px;letter-spacing:-0.223px;color:#38383e;">13.12.2023</span>
<span class="t d" style="left:1404.38px;top:505.00px;letter-spacing:-0.166px;color:#38383e;">13.12.2023</span>
<span class="t d" style="left:1537.75px;top:505.00px;letter-spacing:-0.087px;color:#38383e;">325 225,50</span>
<span class="t d" style="left:1651.57px;top:505.00px;letter-spacing:-0.083px;color:#38383e;">11 875,36</span>
<div class="cb" style="top:506.66px"></div>
</div>
<div class="r">
<div class="ln" style="top:548.67px"></div>
<span class="t d" style="left:321.64px;top:531.00px;letter-spacing:0.081px;color:#64848e;">21157</span>
<span class="t d" style="left:394.98px;top:531.00px;letter-spacing:0.126px;color:#38383e;">Contract</span>
<span class="t d" style="left:485.10px;top:531.00px;letter-spacing:0.094px;color:#38383e;">60-259500</span>
<span class="t d" style="left:695.67px;top:531.00px;letter-spacing:0.015px;color:#38383e;">259500</span>
<span class="t d" style="left:785.50px;top:531.00px;letter-spacing:0.289px;color:#38383e;">Approved</span>
<span class="t d" style="left:875.83px;top:531.00px;transform:scaleX(0.9552);transform-origin:0 0;color:#38383e;">WFF01625</span>
<span class="t d" style="left:1067.85px;top:531.00px;transform:scaleX(0.9282);transform-origin:0 0;color:#38383e;">SUROFI</span>
<span class="t d" style="left:1206.48px;top:531.00px;transform:scaleX(0.8660);transform-origin:0 0;color:#38383e;">NESEJENTA</span>
<span class="t d" style="left:1314.69px;top:531.00px;letter-spacing:-0.223px;color:#38383e;">13.12.2023</span>
<span class="t d" style="left:1404.38px;top:531.00px;letter-spacing:-0.166px;color:#38383e;">13.12.2023</span>
<span class="t d" style="left:1537.75px;top:531.00px;letter-spacing:-0.087px;color:#38383e;">325 225,50</span>
<span class="t d" style="left:1651.57px;top:531.00px;letter-spacing:-0.083px;color:#38383e;">11 875,36</span>
<div class="cb" style="top:531.76px"></div>
</div>
<div class="r">
<div class="ln" style="top:573.78px"></div>
<span class="t d" style="left:321.64px;top:556.00px;letter-spacing:0.081px;color:#64848e;">21153</span>
<span class="t d" style="left:394.98px;top:556.00px;letter-spacing:0.126px;color:#38383e;">Contract</span>
<span class="t d" style="left:485.10px;top:556.00px;letter-spacing:0.094px;color:#38383e;">60-259500</span>
<span class="t d" style="left:695.67px;top:556.00px;letter-spacing:0.015px;color:#38383e;">259500</span>
<span class="t d" style="left:785.50px;top:556.00px;letter-spacing:0.289px;color:#38383e;">Approved</span>
<span class="t d" style="left:875.83px;top:556.00px;transform:scaleX(0.9552);transform-origin:0 0;color:#38383e;">WFF01625</span>
<span class="t d" style="left:1067.85px;top:556.00px;transform:scaleX(0.9282);transform-origin:0 0;color:#38383e;">SUROFI</span>
<span class="t d" style="left:1206.48px;top:556.00px;transform:scaleX(0.8660);transform-origin:0 0;color:#38383e;">NESEJENTA</span>
<span class="t d" style="left:1314.69px;top:556.00px;letter-spacing:-0.223px;color:#38383e;">13.12.2023</span>
<span class="t d" style="left:1404.38px;top:556.00px;letter-spacing:-0.166px;color:#38383e;">13.12.2023</span>
<span class="t d" style="left:1537.75px;top:556.00px;letter-spacing:-0.087px;color:#38383e;">325 225,50</span>
<span class="t d" style="left:1651.57px;top:556.00px;letter-spacing:-0.083px;color:#38383e;">11 875,36</span>
<div class="cb" style="top:556.87px"></div>
</div>
<div class="r">
<div class="ln" style="top:598.89px"></div>
<span class="t d" style="left:321.64px;top:581.00px;letter-spacing:0.081px;color:#64848e;">21149</span>
<span class="t d" style="left:394.98px;top:581.00px;letter-spacing:0.126px;color:#38383e;">Contract</span>
<span class="t d" style="left:485.10px;top:581.00px;letter-spacing:0.094px;color:#38383e;">60-259500</span>
<span class="t d" style="left:695.67px;top:581.00px;letter-spacing:0.015px;color:#38383e;">259500</span>
<span class="t d" style="left:785.50px;top:581.00px;letter-spacing:0.289px;color:#38383e;">Approved</span>
<span class="t d" style="left:875.83px;top:581.00px;transform:scaleX(0.9552);transform-origin:0 0;color:#38383e;">WFF01625</span>
<span class="t d" style="left:1067.85px;top:581.00px;transform:scaleX(0.9282);transform-origin:0 0;color:#38383e;">SUROFI</span>
<span class="t d" style="left:1206.48px;top:581.00px;transform:scaleX(0.8660);transform-origin:0 0;color:#38383e;">NESEJENTA</span>
<span class="t d" style="left:1314.69px;top:581.00px;letter-spacing:-0.223px;color:#38383e;">13.12.2023</span>
<span class="t d" style="left:1404.38px;top:581.00px;letter-spacing:-0.166px;color:#38383e;">13.12.2023</span>
<span class="t d" style="left:1537.75px;top:581.00px;letter-spacing:-0.087px;color:#38383e;">325 225,50</span>
<span class="t d" style="left:1651.57px;top:581.00px;letter-spacing:-0.083px;color:#38383e;">11 875,36</span>
<div class="cb" style="top:581.98px"></div>
</div>
<div class="r">
<div class="ln" style="top:624.00px"></div>
<span class="t d" style="left:321.64px;top:606.00px;letter-spacing:0.081px;color:#64848e;">21145</span>
<span class="t d" style="left:394.98px;top:606.00px;letter-spacing:0.126px;color:#38383e;">Contract</span>
<span class="t d" style="left:485.10px;top:606.00px;letter-spacing:0.094px;color:#38383e;">60-259500</span>
<span class="t d" style="left:695.67px;top:606.00px;letter-spacing:0.015px;color:#38383e;">259500</span>
<span class="t d" style="left:785.50px;top:606.00px;letter-spacing:0.289px;color:#38383e;">Approved</span>
<span class="t d" style="left:875.83px;top:606.00px;transform:scaleX(0.9552);transform-origin:0 0;color:#38383e;">WFF01625</span>
<span class="t d" style="left:1067.85px;top:606.00px;transform:scaleX(0.9282);transform-origin:0 0;color:#38383e;">SUROFI</span>
<span class="t d" style="left:1206.48px;top:606.00px;transform:scaleX(0.8660);transform-origin:0 0;color:#38383e;">NESEJENTA</span>
<span class="t d" style="left:1314.69px;top:606.00px;letter-spacing:-0.223px;color:#38383e;">13.12.2023</span>
<span class="t d" style="left:1404.38px;top:606.00px;letter-spacing:-0.166px;color:#38383e;">13.12.2023</span>
<span class="t d" style="left:1537.75px;top:606.00px;letter-spacing:-0.087px;color:#38383e;">325 225,50</span>
<span class="t d" style="left:1651.57px;top:606.00px;letter-spacing:-0.083px;color:#38383e;">11 875,36</span>
<div class="cb" style="top:607.09px"></div>
</div>
<div class="r">
<div class="ln" style="top:649.11px"></div>
<span class="t d" style="left:321.64px;top:631.00px;letter-spacing:0.081px;color:#64848e;">21141</span>
<span class="t d" style="left:394.98px;top:631.00px;letter-spacing:0.126px;color:#38383e;">Contract</span>
<span class="t d" style="left:485.10px;top:631.00px;letter-spacing:0.094px;color:#38383e;">60-259500</span>
<span class="t d" style="left:695.67px;top:631.00px;letter-spacing:0.015px;color:#38383e;">259500</span>
<span class="t d" style="left:785.50px;top:631.00px;letter-spacing:0.289px;color:#38383e;">Approved</span>
<span class="t d" style="left:875.83px;top:631.00px;transform:scaleX(0.9552);transform-origin:0 0;color:#38383e;">WFF01625</span>
<span class="t d" style="left:1067.85px;top:631.00px;transform:scaleX(0.9282);transform-origin:0 0;color:#38383e;">SUROFI</span>
<span class="t d" style="left:1206.48px;top:631.00px;transform:scaleX(0.8660);transform-origin:0 0;color:#38383e;">NESEJENTA</span>
<span class="t d" style="left:1314.69px;top:631.00px;letter-spacing:-0.223px;color:#38383e;">13.12.2023</span>
<span class="t d" style="left:1404.38px;top:631.00px;letter-spacing:-0.166px;color:#38383e;">13.12.2023</span>
<span class="t d" style="left:1537.75px;top:631.00px;letter-spacing:-0.087px;color:#38383e;">325 225,50</span>
<span class="t d" style="left:1651.57px;top:631.00px;letter-spacing:-0.083px;color:#38383e;">11 875,36</span>
<div class="cb" style="top:632.20px"></div>
</div>
<div class="r">
<div class="ln" style="top:674.22px"></div>
<span class="t d" style="left:321.64px;top:656.00px;letter-spacing:0.081px;color:#64848e;">21137</span>
<span class="t d" style="left:394.98px;top:656.00px;letter-spacing:0.126px;color:#38383e;">Contract</span>
<span class="t d" style="left:485.10px;top:656.00px;letter-spacing:0.094px;color:#38383e;">60-259500</span>
<span class="t d" style="left:695.67px;top:656.00px;letter-spacing:0.015px;color:#38383e;">259500</span>
<span class="t d" style="left:785.50px;top:656.00px;letter-spacing:0.289px;color:#38383e;">Approved</span>
<span class="t d" style="left:875.83px;top:656.00px;transform:scaleX(0.9552);transform-origin:0 0;color:#38383e;">WFF01625</span>
<span class="t d" style="left:1067.85px;top:656.00px;transform:scaleX(0.9282);transform-origin:0 0;color:#38383e;">SUROFI</span>
<span class="t d" style="left:1206.48px;top:656.00px;transform:scaleX(0.8660);transform-origin:0 0;color:#38383e;">NESEJENTA</span>
<span class="t d" style="left:1314.69px;top:656.00px;letter-spacing:-0.223px;color:#38383e;">13.12.2023</span>
<span class="t d" style="left:1404.38px;top:656.00px;letter-spacing:-0.166px;color:#38383e;">13.12.2023</span>
<span class="t d" style="left:1537.75px;top:656.00px;letter-spacing:-0.087px;color:#38383e;">325 225,50</span>
<span class="t d" style="left:1651.57px;top:656.00px;letter-spacing:-0.083px;color:#38383e;">11 875,36</span>
<div class="cb" style="top:657.31px"></div>
</div>
<div class="r">
<div class="ln" style="top:699.33px"></div>
<span class="t d" style="left:321.64px;top:681.00px;letter-spacing:0.081px;color:#64848e;">21133</span>
<span class="t d" style="left:394.98px;top:681.00px;letter-spacing:0.126px;color:#38383e;">Contract</span>
<span class="t d" style="left:485.10px;top:681.00px;letter-spacing:0.094px;color:#38383e;">60-259500</span>
<span class="t d" style="left:695.67px;top:681.00px;letter-spacing:0.015px;color:#38383e;">259500</span>
<span class="t d" style="left:785.50px;top:681.00px;letter-spacing:0.289px;color:#38383e;">Approved</span>
<span class="t d" style="left:875.83px;top:681.00px;transform:scaleX(0.9552);transform-origin:0 0;color:#38383e;">WFF01625</span>
<span class="t d" style="left:1067.85px;top:681.00px;transform:scaleX(0.9282);transform-origin:0 0;color:#38383e;">SUROFI</span>
<span class="t d" style="left:1206.48px;top:681.00px;transform:scaleX(0.8660);transform-origin:0 0;color:#38383e;">NESEJENTA</span>
<span class="t d" style="left:1314.69px;top:681.00px;letter-spacing:-0.223px;color:#38383e;">13.12.2023</span>
<span class="t d" style="left:1404.38px;top:681.00px;letter-spacing:-0.166px;color:#38383e;">13.12.2023</span>
<span class="t d" style="left:1537.75px;top:681.00px;letter-spacing:-0.087px;color:#38383e;">325 225,50</span>
<span class="t d" style="left:1651.57px;top:681.00px;letter-spacing:-0.083px;color:#38383e;">11 875,36</span>
<div class="cb" style="top:682.42px"></div>
</div>
<div class="r">
<div class="ln" style="top:724.44px"></div>
<span class="t d" style="left:321.64px;top:706.00px;letter-spacing:0.081px;color:#64848e;">21129</span>
<span class="t d" style="left:394.98px;top:706.00px;letter-spacing:0.126px;color:#38383e;">Contract</span>
<span class="t d" style="left:485.10px;top:706.00px;letter-spacing:0.094px;color:#38383e;">60-259500</span>
<span class="t d" style="left:695.67px;top:706.00px;letter-spacing:0.015px;color:#38383e;">259500</span>
<span class="t d" style="left:785.50px;top:706.00px;letter-spacing:0.289px;color:#38383e;">Approved</span>
<span class="t d" style="left:875.83px;top:706.00px;transform:scaleX(0.9552);transform-origin:0 0;color:#38383e;">WFF01625</span>
<span class="t d" style="left:1067.85px;top:706.00px;transform:scaleX(0.9282);transform-origin:0 0;color:#38383e;">SUROFI</span>
<span class="t d" style="left:1206.48px;top:706.00px;transform:scaleX(0.8660);transform-origin:0 0;color:#38383e;">NESEJENTA</span>
<span class="t d" style="left:1314.69px;top:706.00px;letter-spacing:-0.223px;color:#38383e;">13.12.2023</span>
<span class="t d" style="left:1404.38px;top:706.00px;letter-spacing:-0.166px;color:#38383e;">13.12.2023</span>
<span class="t d" style="left:1537.75px;top:706.00px;letter-spacing:-0.087px;color:#38383e;">325 225,50</span>
<span class="t d" style="left:1651.57px;top:706.00px;letter-spacing:-0.083px;color:#38383e;">11 875,36</span>
<div class="cb" style="top:707.53px"></div>
</div>
<div class="r">
<div class="ln" style="top:749.55px"></div>
<span class="t d" style="left:321.64px;top:731.00px;letter-spacing:0.081px;color:#64848e;">21125</span>
<span class="t d" style="left:394.98px;top:731.00px;letter-spacing:0.126px;color:#38383e;">Contract</span>
<span class="t d" style="left:485.10px;top:731.00px;letter-spacing:0.094px;color:#38383e;">60-259500</span>
<span class="t d" style="left:695.67px;top:731.00px;letter-spacing:0.015px;color:#38383e;">259500</span>
<span class="t d" style="left:785.50px;top:731.00px;letter-spacing:0.289px;color:#38383e;">Approved</span>
<span class="t d" style="left:875.83px;top:731.00px;transform:scaleX(0.9552);transform-origin:0 0;color:#38383e;">WFF01625</span>
<span class="t d" style="left:1067.85px;top:731.00px;transform:scaleX(0.9282);transform-origin:0 0;color:#38383e;">SUROFI</span>
<span class="t d" style="left:1206.48px;top:731.00px;transform:scaleX(0.8660);transform-origin:0 0;color:#38383e;">NESEJENTA</span>
<span class="t d" style="left:1314.69px;top:731.00px;letter-spacing:-0.223px;color:#38383e;">13.12.2023</span>
<span class="t d" style="left:1404.38px;top:731.00px;letter-spacing:-0.166px;color:#38383e;">13.12.2023</span>
<span class="t d" style="left:1537.75px;top:731.00px;letter-spacing:-0.087px;color:#38383e;">325 225,50</span>
<span class="t d" style="left:1651.57px;top:731.00px;letter-spacing:-0.083px;color:#38383e;">11 875,36</span>
<div class="cb" style="top:732.64px"></div>
</div>
<div class="r">
<div class="ln" style="top:774.66px"></div>
<span class="t d" style="left:321.64px;top:757.00px;letter-spacing:0.081px;color:#64848e;">21121</span>
<span class="t d" style="left:394.98px;top:757.00px;letter-spacing:0.126px;color:#38383e;">Contract</span>
<span class="t d" style="left:485.10px;top:757.00px;letter-spacing:0.094px;color:#38383e;">60-259500</span>
<span class="t d" style="left:695.67px;top:757.00px;letter-spacing:0.015px;color:#38383e;">259500</span>
<span class="t d" style="left:785.50px;top:757.00px;letter-spacing:0.289px;color:#38383e;">Approved</span>
<span class="t d" style="left:875.83px;top:757.00px;transform:scaleX(0.9552);transform-origin:0 0;color:#38383e;">WFF01625</span>
<span class="t d" style="left:1067.85px;top:757.00px;transform:scaleX(0.9282);transform-origin:0 0;color:#38383e;">SUROFI</span>
<span class="t d" style="left:1206.48px;top:757.00px;transform:scaleX(0.8660);transform-origin:0 0;color:#38383e;">NESEJENTA</span>
<span class="t d" style="left:1314.69px;top:757.00px;letter-spacing:-0.223px;color:#38383e;">13.12.2023</span>
<span class="t d" style="left:1404.38px;top:757.00px;letter-spacing:-0.166px;color:#38383e;">13.12.2023</span>
<span class="t d" style="left:1537.75px;top:757.00px;letter-spacing:-0.087px;color:#38383e;">325 225,50</span>
<span class="t d" style="left:1651.57px;top:757.00px;letter-spacing:-0.083px;color:#38383e;">11 875,36</span>
<div class="cb" style="top:757.75px"></div>
</div>
<div class="r">
<div class="ln" style="top:799.77px"></div>
<span class="t d" style="left:321.64px;top:782.00px;letter-spacing:0.081px;color:#64848e;">21117</span>
<span class="t d" style="left:394.98px;top:782.00px;letter-spacing:0.126px;color:#38383e;">Contract</span>
<span class="t d" style="left:485.10px;top:782.00px;letter-spacing:0.094px;color:#38383e;">60-259500</span>
<span class="t d" style="left:695.67px;top:782.00px;letter-spacing:0.015px;color:#38383e;">259500</span>
<span class="t d" style="left:785.50px;top:782.00px;letter-spacing:0.289px;color:#38383e;">Approved</span>
<span class="t d" style="left:875.83px;top:782.00px;transform:scaleX(0.9552);transform-origin:0 0;color:#38383e;">WFF01625</span>
<span class="t d" style="left:1067.85px;top:782.00px;transform:scaleX(0.9282);transform-origin:0 0;color:#38383e;">SUROFI</span>
<span class="t d" style="left:1206.48px;top:782.00px;transform:scaleX(0.8660);transform-origin:0 0;color:#38383e;">NESEJENTA</span>
<span class="t d" style="left:1314.69px;top:782.00px;letter-spacing:-0.223px;color:#38383e;">13.12.2023</span>
<span class="t d" style="left:1404.38px;top:782.00px;letter-spacing:-0.166px;color:#38383e;">13.12.2023</span>
<span class="t d" style="left:1537.75px;top:782.00px;letter-spacing:-0.087px;color:#38383e;">325 225,50</span>
<span class="t d" style="left:1651.57px;top:782.00px;letter-spacing:-0.083px;color:#38383e;">11 875,36</span>
<div class="cb" style="top:782.86px"></div>
</div>
<div class="r">
<div class="ln" style="top:824.88px"></div>
<span class="t d" style="left:321.64px;top:807.00px;letter-spacing:0.081px;color:#64848e;">21113</span>
<span class="t d" style="left:394.98px;top:807.00px;letter-spacing:0.126px;color:#38383e;">Contract</span>
<span class="t d" style="left:485.10px;top:807.00px;letter-spacing:0.094px;color:#38383e;">60-259500</span>
<span class="t d" style="left:695.67px;top:807.00px;letter-spacing:0.015px;color:#38383e;">259500</span>
<span class="t d" style="left:785.50px;top:807.00px;letter-spacing:0.289px;color:#38383e;">Approved</span>
<span class="t d" style="left:875.83px;top:807.00px;transform:scaleX(0.9552);transform-origin:0 0;color:#38383e;">WFF01625</span>
<span class="t d" style="left:1067.85px;top:807.00px;transform:scaleX(0.9282);transform-origin:0 0;color:#38383e;">SUROFI</span>
<span class="t d" style="left:1206.48px;top:807.00px;transform:scaleX(0.8660);transform-origin:0 0;color:#38383e;">NESEJENTA</span>
<span class="t d" style="left:1314.69px;top:807.00px;letter-spacing:-0.223px;color:#38383e;">13.12.2023</span>
<span class="t d" style="left:1404.38px;top:807.00px;letter-spacing:-0.166px;color:#38383e;">13.12.2023</span>
<span class="t d" style="left:1537.75px;top:807.00px;letter-spacing:-0.087px;color:#38383e;">325 225,50</span>
<span class="t d" style="left:1651.57px;top:807.00px;letter-spacing:-0.083px;color:#38383e;">11 875,36</span>
<div class="cb" style="top:807.97px"></div>
</div>
<div class="r">
<div class="ln" style="top:849.99px"></div>
<span class="t d" style="left:321.64px;top:832.00px;letter-spacing:0.081px;color:#64848e;">21109</span>
<span class="t d" style="left:394.98px;top:832.00px;letter-spacing:0.126px;color:#38383e;">Contract</span>
<span class="t d" style="left:485.10px;top:832.00px;letter-spacing:0.094px;color:#38383e;">60-259500</span>
<span class="t d" style="left:695.67px;top:832.00px;letter-spacing:0.015px;color:#38383e;">259500</span>
<span class="t d" style="left:785.50px;top:832.00px;letter-spacing:0.289px;color:#38383e;">Approved</span>
<span class="t d" style="left:875.83px;top:832.00px;transform:scaleX(0.9552);transform-origin:0 0;color:#38383e;">WFF01625</span>
<span class="t d" style="left:1067.85px;top:832.00px;transform:scaleX(0.9282);transform-origin:0 0;color:#38383e;">SUROFI</span>
<span class="t d" style="left:1206.48px;top:832.00px;transform:scaleX(0.8660);transform-origin:0 0;color:#38383e;">NESEJENTA</span>
<span class="t d" style="left:1314.69px;top:832.00px;letter-spacing:-0.223px;color:#38383e;">13.12.2023</span>
<span class="t d" style="left:1404.38px;top:832.00px;letter-spacing:-0.166px;color:#38383e;">13.12.2023</span>
<span class="t d" style="left:1537.75px;top:832.00px;letter-spacing:-0.087px;color:#38383e;">325 225,50</span>
<span class="t d" style="left:1651.57px;top:832.00px;letter-spacing:-0.083px;color:#38383e;">11 875,36</span>
<div class="cb" style="top:833.08px"></div>
</div>
</main>
<div class="a" style="left:1745.8px;top:384.5px;width:24px;height:24px;border-radius:12px;background:#8490a9"></div>
<div class="a" style="left:0;top:772px;width:1748px;height:64px;background:linear-gradient(to bottom, rgba(0,0,0,0), rgba(0,0,0,0.44))"></div>
</body></html>
